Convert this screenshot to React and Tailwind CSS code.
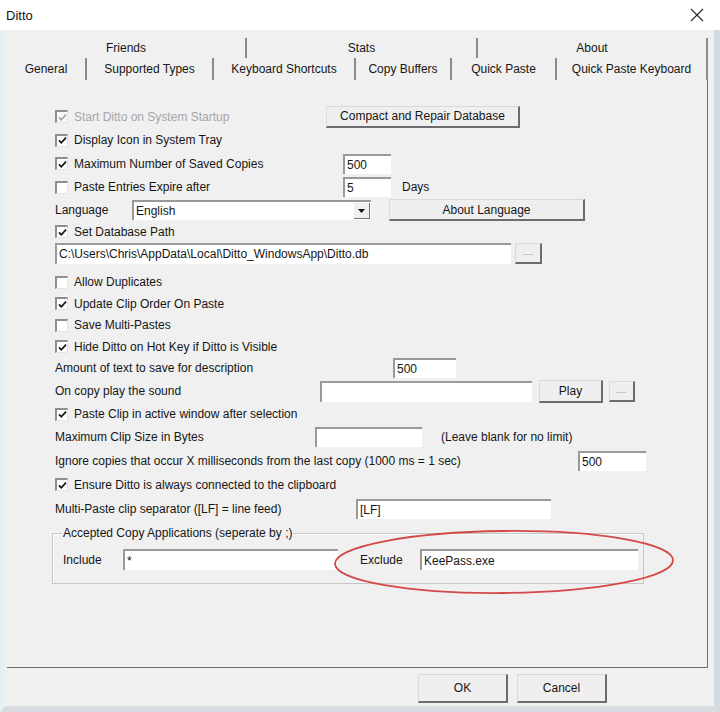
import React from 'react';

const Check = ({ checked, disabled, children }) => (
  <div className={`flex items-center ${disabled ? 'text-[#a6a6a6]' : ''}`}>
    <span
      className={`w-[13px] h-[13px] shrink-0 flex items-center justify-center border-t-2 border-l-2 border-r border-b border-t-[#8f8f8f] border-l-[#8f8f8f] border-r-[#e4e4e4] border-b-[#e4e4e4] ${
        disabled ? 'bg-[#f7f7f7]' : 'bg-white'
      }`}
    >
      {checked && (
        <svg width="9" height="9" viewBox="0 0 9 9">
          <path d="M1 4.3 L3.3 6.8 L8 1.6" fill="none" stroke={disabled ? '#a8a8a8' : '#141414'} strokeWidth="1.7" />
        </svg>
      )}
    </span>
    <span className="ml-[6px] whitespace-nowrap">{children}</span>
  </div>
);

const Field = ({ className, children }) => (
  <div
    className={`shrink-0 flex items-center bg-white border-t-2 border-l-2 border-t-[#999999] border-l-[#999999] pl-[2px] whitespace-nowrap overflow-hidden ${className}`}
  >
    {children}
  </div>
);

const Btn = ({ className, children }) => (
  <div
    className={`shrink-0 flex items-center justify-center bg-[#efefef] border-t border-l border-r-2 border-b-2 border-t-[#dadada] border-l-[#dadada] border-r-[#6c6c6c] border-b-[#6c6c6c] whitespace-nowrap ${className}`}
  >
    {children}
  </div>
);

const Tab = ({ className, children }) => (
  <div className={`h-full flex items-center justify-center border-r-2 border-r-[#8a8a8a] whitespace-nowrap ${className}`}>
    {children}
  </div>
);

export default function App() {
  return (
    <div className="relative w-[720px] h-[712px] flex flex-col overflow-hidden bg-white font-['Liberation_Sans',Arial,sans-serif] text-[12px] leading-none text-[#161616]">
      {/* Title bar */}
      <div className="h-[30px] shrink-0 flex items-center justify-between pl-[6px] pr-[16px] bg-white">
        <span className="text-[13px] text-[#111]">Ditto</span>
        <svg width="14" height="14" viewBox="0 0 14 14">
          <path d="M1 1 L13 13 M13 1 L1 13" stroke="#2a2a2a" strokeWidth="1.2" />
        </svg>
      </div>

      <div className="flex-1 flex flex-col bg-[#f0f0f0] border-l-[5px] border-l-[#e4f1f3] border-r-[6px] border-r-[#d3dae0] border-b-[6px] border-b-[#d6dce1] pl-[2px] pt-[8px]">
        {/* Tab rows */}
        <div className="flex h-[20px] w-[701px]">
          <Tab className="w-[240px]">Friends</Tab>
          <Tab className="w-[231px]">Stats</Tab>
          <Tab className="w-[230px]">About</Tab>
        </div>
        <div className="flex h-[22px] w-[701px]">
          <Tab className="w-[80px]">General</Tab>
          <Tab className="w-[127px]">Supported Types</Tab>
          <Tab className="w-[142px]">Keyboard Shortcuts</Tab>
          <Tab className="w-[96px]">Copy Buffers</Tab>
          <Tab className="w-[105px]">Quick Paste</Tab>
          <Tab className="w-[151px]">Quick Paste Keyboard</Tab>
        </div>

        {/* Panel */}
        <div className="h-[588px] w-[701px] shrink-0 flex flex-col pl-[48px] pt-[25px] border-r border-b border-r-[#6e6e6e] border-b-[#6e6e6e]">
          <div className="flex items-center h-[23px]">
            <div className="w-[271px] shrink-0">
              <Check checked disabled>Start Ditto on System Startup</Check>
            </div>
            <Btn className="w-[194px] h-[22px] border-t-[#9d9d9d] border-l-[#9d9d9d]">Compact and Repair Database</Btn>
          </div>
          <div className="flex items-center h-[24px]">
            <Check checked>Display Icon in System Tray</Check>
          </div>
          <div className="flex items-center h-[23px]">
            <div className="w-[288px] shrink-0">
              <Check checked>Maximum Number of Saved Copies</Check>
            </div>
            <Field className="w-[48px] h-[20px]">500</Field>
          </div>
          <div className="flex items-center h-[24px]">
            <div className="w-[288px] shrink-0">
              <Check>Paste Entries Expire after</Check>
            </div>
            <Field className="w-[48px] h-[20px]">5</Field>
            <span className="ml-[11px]">Days</span>
          </div>
          <div className="flex items-center h-[22px]">
            <div className="w-[77px] shrink-0">Language</div>
            <Field className="w-[239px] h-[20px] justify-between pr-[1px]">
              <span>English</span>
              <div className="w-[16px] h-[16px] flex items-center justify-center bg-[#f0f0f0] border-r border-b border-r-[#707070] border-b-[#707070]">
                <svg width="7" height="4" viewBox="0 0 7 4">
                  <path d="M0 0 L7 0 L3.5 4 Z" fill="#111" />
                </svg>
              </div>
            </Field>
            <Btn className="ml-[18px] w-[196px] h-[22px]">About Language</Btn>
          </div>
          <div className="flex items-center h-[21px]">
            <Check checked>Set Database Path</Check>
          </div>
          <div className="flex items-center h-[22px]">
            <Field className="w-[456px] h-[21px]">{'C:\\Users\\Chris\\AppData\\Local\\Ditto_WindowsApp\\Ditto.db'}</Field>
            <Btn className="ml-[4px] w-[27px] h-[21px] text-[9px] text-[#8a8a8a]">....</Btn>
          </div>
          <div className="flex items-center h-[22px] mt-[7px]">
            <Check>Allow Duplicates</Check>
          </div>
          <div className="flex items-center h-[21px]">
            <Check checked>Update Clip Order On Paste</Check>
          </div>
          <div className="flex items-center h-[22px]">
            <Check>Save Multi-Pastes</Check>
          </div>
          <div className="flex items-center h-[21px]">
            <Check checked>Hide Ditto on Hot Key if Ditto is Visible</Check>
          </div>
          <div className="flex items-center h-[22px]">
            <div className="w-[338px] shrink-0">Amount of text to save for description</div>
            <Field className="w-[63px] h-[20px]">500</Field>
          </div>
          <div className="flex items-center h-[24px]">
            <div className="w-[265px] shrink-0">On copy play the sound</div>
            <Field className="w-[212px] h-[21px]" />
            <Btn className="ml-[7px] w-[64px] h-[23px]">Play</Btn>
            <Btn className="ml-[6px] w-[26px] h-[21px] text-[9px] text-[#8a8a8a]">....</Btn>
          </div>
          <div className="flex items-center h-[22px]">
            <Check checked>Paste Clip in active window after selection</Check>
          </div>
          <div className="flex items-center h-[23px]">
            <div className="w-[260px] shrink-0">Maximum Clip Size in Bytes</div>
            <Field className="w-[107px] h-[20px]" />
            <span className="ml-[19px]">(Leave blank for no limit)</span>
          </div>
          <div className="flex items-center h-[25px]">
            <div className="w-[523px] shrink-0 whitespace-nowrap">
              Ignore copies that occur X milliseconds from the last copy (1000 ms = 1 sec)
            </div>
            <Field className="w-[68px] h-[20px]">500</Field>
          </div>
          <div className="flex items-center h-[23px]">
            <Check checked>Ensure Ditto is always connected to the clipboard</Check>
          </div>
          <div className="flex items-center h-[25px]">
            <div className="w-[301px] shrink-0">Multi-Paste clip separator ([LF] = line feed)</div>
            <Field className="w-[195px] h-[20px]">[LF]</Field>
          </div>

          {/* Group box */}
          <div className="relative mt-[12px] ml-[-3px] w-[592px] h-[51px] border border-[#c6c6c6] shadow-[inset_1px_1px_0_#ffffff] pt-[15px] pl-[10px]">
            <span className="absolute left-[9px] top-[-7px] px-[1px] bg-[#f0f0f0] whitespace-nowrap">
              Accepted Copy Applications (seperate by ;)
            </span>
            <div className="flex items-center h-[21px]">
              <div className="w-[60px] shrink-0">Include</div>
              <Field className="w-[215px] h-[21px]">*</Field>
              <div className="ml-[22px] w-[60px] shrink-0">Exclude</div>
              <Field className="w-[218px] h-[21px]">KeePass.exe</Field>
            </div>
          </div>
        </div>

        {/* Footer buttons */}
        <div className="flex pt-[6px] pl-[411px]">
          <Btn className="w-[90px] h-[29px]">OK</Btn>
          <Btn className="ml-[9px] w-[90px] h-[29px]">Cancel</Btn>
        </div>
      </div>

      {/* Red annotation ellipse */}
      <svg className="absolute left-0 top-0 pointer-events-none" width="720" height="712" viewBox="0 0 720 712">
        <ellipse cx="504" cy="562" rx="169" ry="31" fill="none" stroke="#d44848" strokeWidth="1.8" transform="rotate(-0.6 504 562)" />
      </svg>
    </div>
  );
}
